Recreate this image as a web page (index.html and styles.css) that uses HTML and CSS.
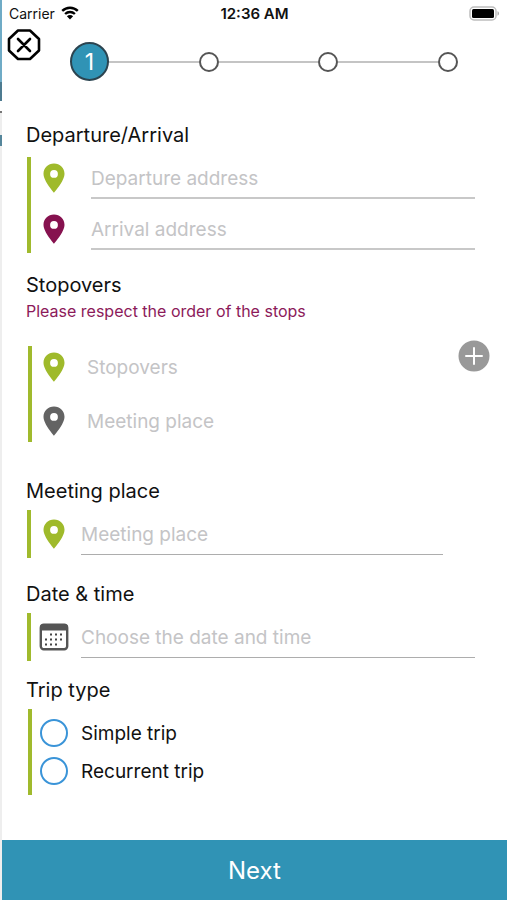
FILE: index.html
```html
<!DOCTYPE html>
<html lang="en">
<head>
<meta charset="utf-8">
<meta name="viewport" content="width=device-width, initial-scale=1">
<title>New trip</title>
<link rel="stylesheet" href="styles.css">
</head>
<body>
<svg class="symbols" aria-hidden="true">
  <symbol id="pin" viewBox="0 0 22 30">
    <path fill="currentColor" fill-rule="evenodd" d="M11 0.500C5.100 0.500 0.500 5.100 0.500 10.800C0.500 18.200 11 29.700 11 29.700S21.500 18.200 21.500 10.800C21.500 5.100 16.900 0.500 11 0.500ZM11 7A3.900 3.900 0 1 1 11 14.800A3.900 3.900 0 1 1 11 7Z"/>
  </symbol>
</svg>
<div class="page">
  <div class="status">
    <div class="carrier">
      <span>Carrier</span>
      <svg class="wifi" viewBox="0 0 18 14" aria-hidden="true">
        <path d="M1.200 4.900C5.600 0.600 12.400 0.600 16.800 4.900M4.100 8C6.900 5.300 11.100 5.300 13.900 8" fill="none" stroke="#000" stroke-width="2.400"/>
        <path d="M9 13.500L5.900 10.300C7.700 8.700 10.300 8.700 12.100 10.300Z"/>
      </svg>
    </div>
    <span class="time">12:36 AM</span>
    <svg class="battery" viewBox="0 0 31 15" aria-hidden="true">
      <rect x="1" y="1" width="26" height="13" rx="4" fill="#fff" stroke="#bdbdbd" stroke-width="1.500"/>
      <rect x="3" y="3" width="22" height="9" rx="1.500"/>
      <path d="M28.500 5.300C30.500 6 30.500 9 28.500 9.700Z" fill="#aaa"/>
    </svg>
  </div>

  <header class="top">
    <button class="close" type="button" aria-label="Close">
      <svg viewBox="0 0 34 34" aria-hidden="true">
        <path d="M11 2.500H23L32 11V22.500L23 31H11L2 22.500V11ZM11 11L23 23M23 11L11 23" fill="none" stroke="#000" stroke-width="2.600" stroke-linejoin="round" stroke-linecap="round"/>
      </svg>
    </button>
    <ol class="steps">
      <li class="step current" aria-current="step">1</li>
      <li class="step"></li>
      <li class="step"></li>
      <li class="step"></li>
    </ol>
  </header>

  <form class="form" id="trip">
    <section class="section route">
      <h2>Departure/Arrival</h2>
      <div class="group">
        <div class="row wide"><svg class="pin green"><use href="#pin"/></svg><input type="text" placeholder="Departure address" aria-label="Departure address"></div>
        <div class="row wide"><svg class="pin plum"><use href="#pin"/></svg><input type="text" placeholder="Arrival address" aria-label="Arrival address"></div>
      </div>
    </section>

    <section class="section stopovers">
      <h2>Stopovers</h2>
      <p class="note">Please respect the order of the stops</p>
      <div class="with-action">
        <div class="group inset plain">
          <div class="row medium"><svg class="pin green"><use href="#pin"/></svg><input type="text" placeholder="Stopovers" aria-label="Stopovers"></div>
          <div class="row medium"><svg class="pin gray"><use href="#pin"/></svg><input type="text" placeholder="Meeting place" aria-label="Stopover meeting place"></div>
        </div>
        <button class="add" type="button" aria-label="Add stopover">
          <svg viewBox="0 0 32 32" aria-hidden="true"><circle cx="16" cy="16" r="15.500" fill="#999"/><path d="M16 8V24M8 16H24" stroke="#fff" stroke-width="2" stroke-linecap="round"/></svg>
        </button>
      </div>
    </section>

    <section class="section meeting">
      <h2><label for="place">Meeting place</label></h2>
      <div class="group single">
        <div class="row"><svg class="pin green"><use href="#pin"/></svg><input id="place" type="text" placeholder="Meeting place"></div>
      </div>
    </section>

    <section class="section date">
      <h2><label for="date">Date &amp; time</label></h2>
      <div class="group single">
        <div class="row">
          <svg class="calendar" viewBox="0 0 30 28" aria-hidden="true">
            <rect x="1.800" y="1.800" width="26.400" height="24.400" rx="3" fill="#fff" stroke="#555" stroke-width="2.400"/>
            <path d="M1 7.500V4Q1 1 4 1H26Q29 1 29 4V7.500Z" fill="#555"/>
            <path d="M11 11.500H24M6 16.500H24M6 21.500H19" fill="none" stroke="#444" stroke-width="2" stroke-dasharray="2 3"/>
          </svg>
          <input id="date" type="text" placeholder="Choose the date and time">
        </div>
      </div>
    </section>

    <section class="section type">
      <h2 id="type-title">Trip type</h2>
      <div class="group inset options" role="radiogroup" aria-labelledby="type-title">
        <label class="option"><input type="radio" name="type">Simple trip</label>
        <label class="option"><input type="radio" name="type">Recurrent trip</label>
      </div>
    </section>
  </form>

  <button class="next" type="submit" form="trip">Next</button>
</div>
</body>
</html>
```
FILE: styles.css
```css
*,
*::before,
*::after {
  box-sizing: border-box;
}

body {
  margin: 0;
  color: #111;
  background: #fff;
  font-family: Inter, "Liberation Sans", sans-serif;
}

button,
input {
  margin: 0;
  padding: 0;
  border: 0;
  background: none;
  font: inherit;
}

svg {
  display: block;
  flex: none;
}

.symbols {
  display: none;
}

/* The sliver of the previous screen shows as the left border */
.page {
  display: flex;
  flex-direction: column;
  min-height: 100vh;
  padding-left: 2px;
  background: linear-gradient(#6fabc6 0 82px, #4d7b90 82px 101px, #fff 101px 111px, #777 111px 113px, #eee 113px 135px, #55869b 135px 146px, #eee 146px) left top / 2px 100% no-repeat;
}

.status {
  display: grid;
  grid-template-columns: 1fr auto 1fr;
  align-items: center;
  height: 28px;
  padding: 0 7px 2px;
  font-size: 14px;
}

.carrier {
  display: flex;
  align-items: center;
  gap: 6px;
}

.wifi {
  width: 18px;
  height: 14px;
}

.time {
  font-size: 15px;
  font-weight: 600;
}

.battery {
  width: 31px;
  height: 15px;
  justify-self: end;
}

.top {
  display: flex;
  align-items: flex-start;
  gap: 29px;
  padding: 0 49px 0 5px;
}

.close svg {
  width: 34px;
  height: 34px;
}

.steps {
  display: flex;
  flex: 1;
  align-items: center;
  justify-content: space-between;
  margin: 14px 0 0;
  padding: 0;
  list-style: none;
}

.step {
  display: flex;
  align-items: center;
}

.step::after {
  width: 20px;
  height: 20px;
  border: 2px solid #555;
  border-radius: 50%;
  content: "";
}

.step + .step {
  flex: 1;
}

.step + .step::before {
  flex: 1;
  height: 2px;
  background: #c4c4c4;
  content: "";
}

/* Overlaps the first line so that all step centres are evenly spaced */
.current {
  z-index: 1;
  justify-content: center;
  width: 39px;
  height: 39px;
  margin-right: -10px;
  border: 2px solid #2b4450;
  border-radius: 50%;
  background: #3093b5;
  color: #fff;
  font-size: 23px;
}

.current::after {
  display: none;
}

.form {
  flex: 1;
  padding: 42px 32px 40px 24px;
}

.stopovers {
  margin-top: 20px;
}

.meeting {
  margin-top: 37px;
}

.date {
  margin-top: 24px;
}

.type {
  margin-top: 17px;
}

h2 {
  margin: 0 0 7px;
  font-size: 20px;
  font-weight: 400;
  line-height: 24px;
}

.route h2 {
  margin-bottom: 10px;
}

.stopovers h2 {
  margin: 0;
}

.note {
  margin: 4px 0 19px;
  color: #8c1a5a;
  font-size: 16px;
  line-height: 20px;
}

.group {
  display: grid;
  flex: 1;
  gap: 9px;
  margin-left: 1px;
  padding: 0 0 3px 9px;
  border-left: 4px solid #a0ba2d;
}

.inset {
  margin-left: 2px;
  padding-left: 8px;
}

.plain {
  gap: 12px;
  margin-top: 6px;
  padding-bottom: 0;
}

.single {
  padding: 3px 0 3px 9px;
}

.meeting .group {
  margin-right: 32px;
}

.row {
  display: flex;
  align-items: center;
  gap: 13px;
}

.medium {
  gap: 19px;
}

.wide {
  gap: 23px;
}

.row input {
  flex: 1;
  min-width: 0;
  height: 42px;
  padding-top: 2px;
  border-bottom: 1px solid #adadad;
  font-size: 19px;
}

.row.wide input {
  border-bottom: 2px solid #c8c8c8;
}

.plain .row input {
  border-color: transparent;
}

.row input::placeholder {
  color: #c4c4c6;
  opacity: 1;
}

.row input:focus {
  outline: none;
  border-color: #3093b5;
}

.pin {
  width: 22px;
  height: 30px;
  margin: 0 3px;
}

.green {
  color: #9fba2b;
}

.plum {
  color: #86124f;
}

.gray {
  color: #636363;
}

.calendar {
  width: 30px;
  height: 28px;
  margin: 0 -1px;
}

.with-action {
  display: flex;
  align-items: flex-start;
  margin-right: -15px;
}

.add svg {
  width: 32px;
  height: 32px;
}

.options {
  gap: 0;
  padding: 5px 0 5px 8px;
}

.option {
  display: flex;
  align-items: center;
  gap: 13px;
  height: 38px;
  font-size: 19px;
}

.option input {
  appearance: none;
  width: 28px;
  height: 28px;
  border: 2px solid #3a94d8;
  border-radius: 50%;
}

.option input:checked {
  background: radial-gradient(#3a94d8 0 7px, transparent 8px);
}

.next {
  height: 60px;
  background: #3093b5;
  color: #fff;
  font-size: 24px;
}
```
